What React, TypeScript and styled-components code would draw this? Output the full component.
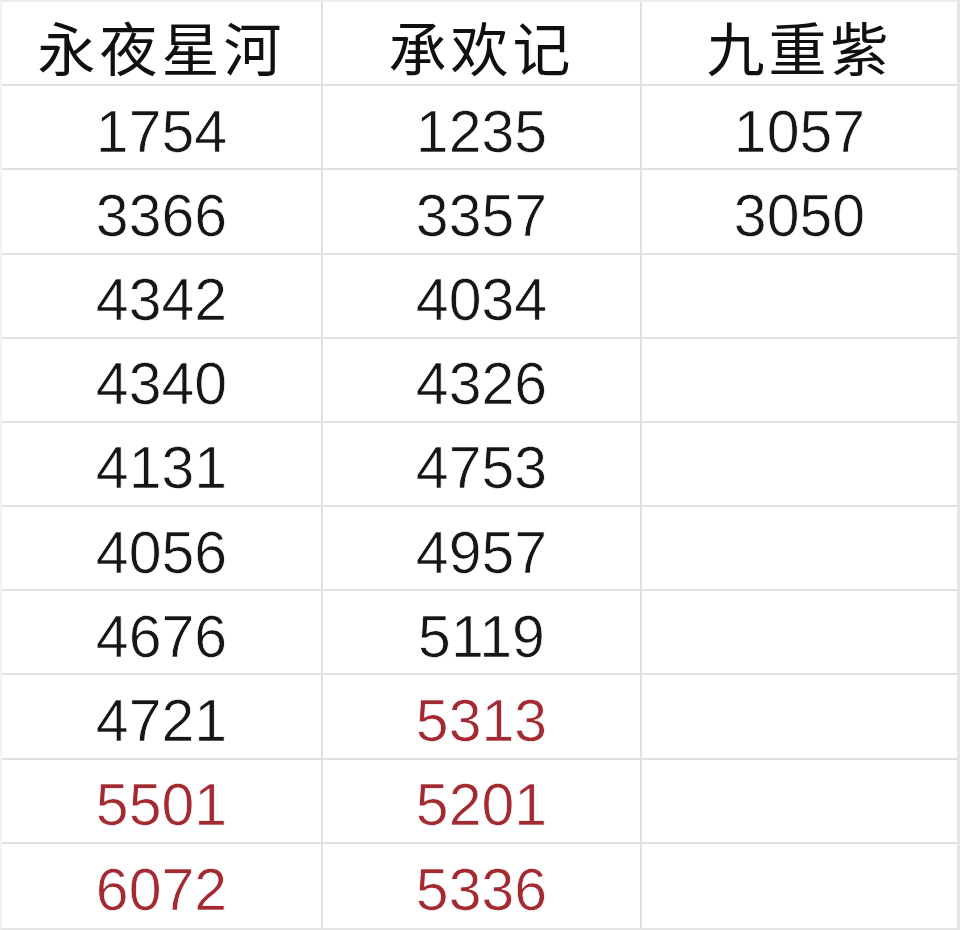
import React from "react";
import styled, { createGlobalStyle } from "styled-components";

const Global = createGlobalStyle`
  html, body { margin: 0; padding: 0; background: #ffffff; }
  body { width: 960px; height: 930px; overflow: hidden; }
`;

const Sheet = styled.div`
  width: 960px;
  height: 930px;
  box-sizing: border-box;
  display: grid;
  grid-template-columns: 321px 319px 1fr;
  grid-template-rows: repeat(11, 1fr);
  border-top: 2px solid #ececec;
  border-left: 2px solid #f2f2f2;
  border-right: 3px solid #e6e6e6;
  border-bottom: 2px solid #e6e6e6;
  background: #ffffff;
`;

const Cell = styled.div<{ $last?: boolean; $lastRow?: boolean }>`
  display: flex;
  align-items: center;
  justify-content: center;
  box-sizing: border-box;
  border-right: ${(p) => (p.$last ? "none" : "2px solid #e0e0e0")};
  border-bottom: ${(p) => (p.$lastRow ? "none" : "2px solid #e0e0e0")};
`;

const Head = styled.span`
  font-family: "Noto Sans CJK SC", "Noto Sans", sans-serif;
  font-size: 58px;
  font-weight: 400;
  color: #101010;
  padding-top: 6px;
  letter-spacing: 4px;
  line-height: 1;
`;

const Num = styled.span<{ $red?: boolean }>`
  font-family: "Liberation Sans", Arial, sans-serif;
  font-size: 59px;
  line-height: 1;
  padding-top: 10px;
  color: ${(p) => (p.$red ? "#a22a30" : "#161616")};
  -webkit-text-stroke: 0.7px #ffffff;
`;

type V = { v: string; red?: boolean } | null;

const headers = ["永夜星河", "承欢记", "九重紫"];
const rows: V[][] = [
  [{ v: "1754" }, { v: "1235" }, { v: "1057" }],
  [{ v: "3366" }, { v: "3357" }, { v: "3050" }],
  [{ v: "4342" }, { v: "4034" }, null],
  [{ v: "4340" }, { v: "4326" }, null],
  [{ v: "4131" }, { v: "4753" }, null],
  [{ v: "4056" }, { v: "4957" }, null],
  [{ v: "4676" }, { v: "5119" }, null],
  [{ v: "4721" }, { v: "5313", red: true }, null],
  [{ v: "5501", red: true }, { v: "5201", red: true }, null],
  [{ v: "6072", red: true }, { v: "5336", red: true }, null],
];

export default function App() {
  return (
    <>
      <Global />
      <Sheet>
        {headers.map((h, i) => (
          <Cell key={"h" + i} $last={i === 2}>
            <Head>{h}</Head>
          </Cell>
        ))}
        {rows.map((r, ri) =>
          r.map((c, ci) => (
            <Cell key={ri + "-" + ci} $last={ci === 2} $lastRow={ri === rows.length - 1}>
              {c && <Num $red={c.red}>{c.v}</Num>}
            </Cell>
          ))
        )}
      </Sheet>
    </>
  );
}
